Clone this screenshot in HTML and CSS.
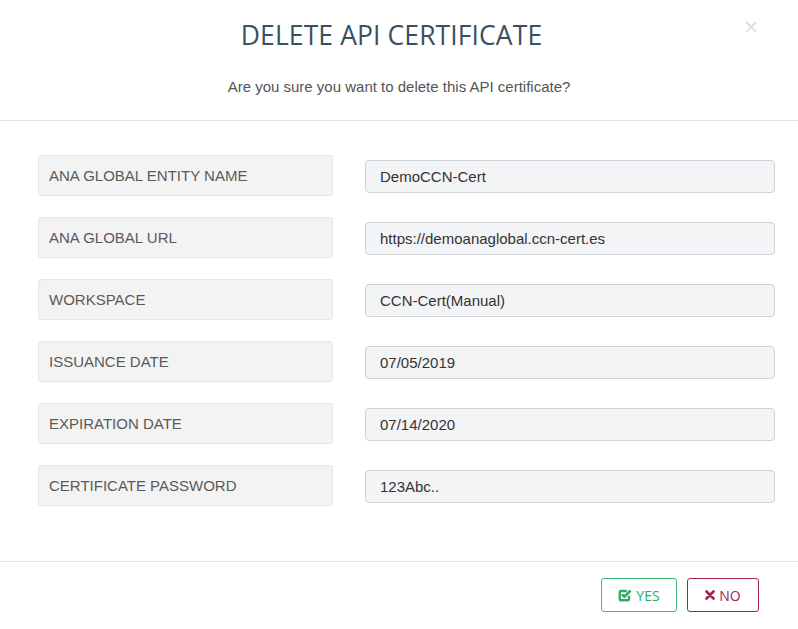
FILE: index.html
```html
<!DOCTYPE html>
<html>
<head>
<meta charset="utf-8">
<link rel="stylesheet" href="styles.css">
</head>
<body>
<div class="modal">
  <header class="modal-header">
    <h1 class="modal-title">DELETE API CERTIFICATE</h1>
    <span class="close">&times;</span>
    <p class="modal-sub">Are you sure you want to delete this API certificate?</p>
  </header>
  <section class="modal-body">
    <div class="row"><div class="label">ANA GLOBAL ENTITY NAME</div><div class="value">DemoCCN-Cert</div></div>
    <div class="row"><div class="label">ANA GLOBAL URL</div><div class="value">https://demoanaglobal.ccn-cert.es</div></div>
    <div class="row"><div class="label">WORKSPACE</div><div class="value">CCN-Cert(Manual)</div></div>
    <div class="row"><div class="label">ISSUANCE DATE</div><div class="value">07/05/2019</div></div>
    <div class="row"><div class="label">EXPIRATION DATE</div><div class="value">07/14/2020</div></div>
    <div class="row"><div class="label">CERTIFICATE PASSWORD</div><div class="value">123Abc..</div></div>
  </section>
  <footer class="modal-footer">
    <button class="btn btn-yes"><svg class="ico" viewBox="0 0 14 14" width="14" height="14"><path d="M11 7.8V11.2a1 1 0 0 1-1 1H2.8a1 1 0 0 1-1-1V4a1 1 0 0 1 1-1h6" fill="none" stroke="currentColor" stroke-width="2.4"/><path d="M4 6.3l2.4 2.4 6.2-6.2" fill="none" stroke="currentColor" stroke-width="2.6"/></svg>YES</button>
    <button class="btn btn-no"><svg class="ico" viewBox="0 0 10 10" width="10" height="10"><path d="M1.5 1.5l7 7M8.5 1.5l-7 7" stroke="currentColor" stroke-width="2.6" stroke-linecap="round"/></svg>NO</button>
  </footer>
</div>
</body>
</html>
```
FILE: styles.css
```css
* { box-sizing: border-box; }
html, body { margin: 0; padding: 0; background: #fff; }
body { font-family: "Liberation Sans", Arial, sans-serif; width: 798px; height: 629px; overflow: hidden; }
.modal { width: 798px; height: 629px; display: flex; flex-direction: column; }
.modal-header { position: relative; height: 121px; border-bottom: 1px solid #e5e5e5; padding-top: 17px; }
.modal-title { margin: 0; font-family: "Open Sans", sans-serif; font-weight: 400; font-size: 26.5px; line-height: 36px; color: #3b4f63; text-align: center; padding-right: 15px; letter-spacing: 0.1px; }
.close { position: absolute; right: 40px; top: 13px; font-family: "Liberation Sans", Arial, sans-serif; font-size: 24px; color: #ddd; line-height: 28px; }
.modal-sub { margin: 0; margin-top: 24px; font-size: 15px; color: #555; text-align: center; line-height: 20px; }
.modal-body { padding: 34px 23px 0 38px; display: flex; flex-direction: column; gap: 21px; height: 441px; border-bottom: 1px solid #e5e5e5; }
.row { display: flex; align-items: flex-start; gap: 32px; height: 41px; }
.label { width: 295px; height: 41px; background: #f3f3f3; border: 1px solid #e6e6e6; border-radius: 3px; padding-left: 10px; font-size: 15px; color: #5a5a5a; display: flex; align-items: center; }
.value { flex: 1; height: 33px; margin-top: 5px; background: #f3f4f6; border: 1px solid #cfd2d6; border-radius: 4px; padding-left: 14px; font-size: 15px; color: #333; display: flex; align-items: center; }
.modal-footer { display: flex; justify-content: flex-end; gap: 10px; padding: 16px 39px 0 0; }
.btn { height: 34px; background: #fff; border-radius: 3px; font-family: "Open Sans", sans-serif; font-size: 14px; display: flex; align-items: center; justify-content: center; gap: 4px; padding: 0; cursor: pointer; }
.btn-yes { width: 76px; border: 1px solid #3cb878; color: #2fae63; }
.btn-no { width: 72px; border: 1px solid #a3224f; color: #a3224f; }
.ico { display: block; }
```
